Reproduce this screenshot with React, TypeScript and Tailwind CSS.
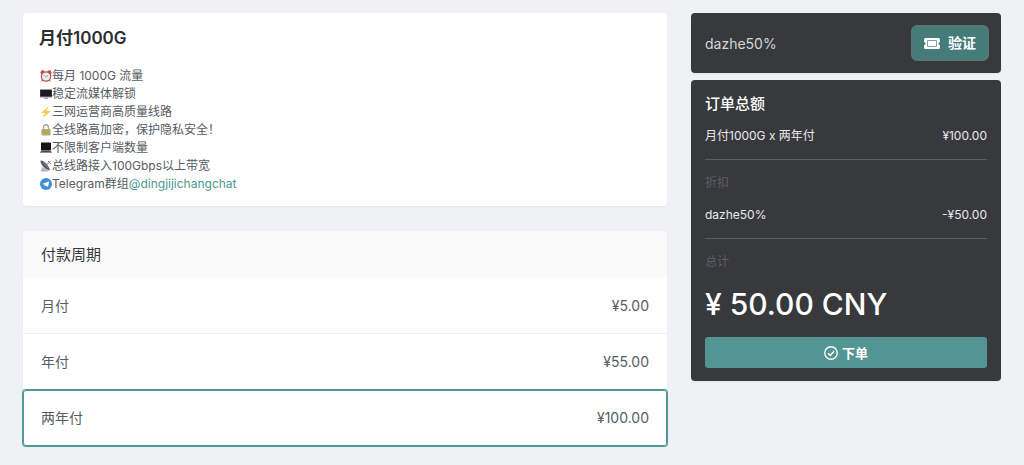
import React, { useState } from 'react';

interface Period {
  id: string;
  label: string;
  price: number;
}

const PERIODS: Period[] = [
  { id: 'month', label: '月付', price: 5 },
  { id: 'year', label: '年付', price: 55 },
  { id: 'two_year', label: '两年付', price: 100 },
];

const ClockIcon = () => (
  <svg viewBox="0 0 24 24" className="size-3 shrink-0" aria-hidden="true">
    <path d="M6 19l-3 4M18 19l3 4" stroke="#8d4a4c" strokeWidth="2" />
    <circle cx="5.5" cy="5" r="4.5" fill="#c5484b" />
    <circle cx="18.5" cy="5" r="4.5" fill="#c5484b" />
    <circle cx="12" cy="13" r="10.5" fill="#b9474b" />
    <circle cx="12" cy="13" r="8.2" fill="#f1ecec" />
    <path d="M7.5 10l4.5 4 4-3" fill="none" stroke="#8b8b90" strokeWidth="1.5" />
  </svg>
);

const MonitorIcon = () => (
  <svg viewBox="0 0 24 24" className="size-3 shrink-0" aria-hidden="true">
    <rect x="0" y="3" width="24" height="16" rx="1" fill="#8b8f95" />
    <rect x="0.5" y="3.5" width="23" height="13.5" fill="#1a1b1e" />
    <path d="M9 19h6l1 3H8z" fill="#a3a6aa" />
  </svg>
);

const BoltIcon = () => (
  <svg viewBox="0 0 24 24" className="size-3 shrink-0" aria-hidden="true">
    <path d="M18 0L2 14h8L5 24l17-14h-9z" fill="#fbc94b" />
  </svg>
);

const LockIcon = () => (
  <svg viewBox="0 0 24 24" className="size-3 shrink-0" aria-hidden="true">
    <path d="M7 12V6.5a5 5 0 0 1 10 0V12" fill="none" stroke="#a3a6a6" strokeWidth="2.6" />
    <rect x="3" y="10" width="18" height="13" rx="1.5" fill="#b9ae6c" />
    <path d="M3 14h18M3 18h18" stroke="#9f9555" strokeWidth="1.2" />
  </svg>
);

const LaptopIcon = () => (
  <svg viewBox="0 0 24 24" className="size-3 shrink-0" aria-hidden="true">
    <rect x="2" y="1" width="20" height="15" rx="1" fill="#141518" />
    <path d="M2 16h20l2 6H0z" fill="#8a8c91" />
    <path d="M4 17.5h16l1 2.5H3z" fill="#46484d" />
  </svg>
);

const SatelliteIcon = () => (
  <svg viewBox="0 0 24 24" className="size-3 shrink-0" aria-hidden="true">
    <path d="M1 23l5-10 9 8 2 2z" fill="#aeb2b8" />
    <path d="M1 1c-1 9 4 19 19 20z" fill="#d3d6da" />
    <path d="M1 1c8 1 17 10 19 20C11 19 2 11 1 1z" fill="#54585f" />
    <path d="M6 6c4 2 8 6 10 10" fill="none" stroke="#8e9298" strokeWidth="1.5" />
    <path d="M11 12l10-10M16 2l6 6" stroke="#7c8086" strokeWidth="2" />
  </svg>
);

const TelegramIcon = () => (
  <svg viewBox="0 0 24 24" className="size-3 shrink-0" aria-hidden="true">
    <circle cx="12" cy="12" r="12" fill="#3d8fd6" />
    <path d="M4.5 12L18.5 6.3 16 18.2l-4.2-3-2.1 2-.4-3.8z" fill="#fff" />
    <path d="M9.3 13.4l6.4-4.6-4.6 5.4z" fill="#b9d8f0" />
  </svg>
);

const TicketIcon = () => (
  <svg viewBox="0 0 32 22" className="h-[11px] w-4" aria-hidden="true">
    <path
      d="M3 0h26a3 3 0 0 1 3 3v5a3 3 0 0 0 0 6v5a3 3 0 0 1-3 3H3a3 3 0 0 1-3-3v-5a3 3 0 0 0 0-6V3a3 3 0 0 1 3-3z"
      fill="#fff"
    />
    <rect x="7" y="5" width="18" height="12" rx="1" fill="none" stroke="#457b78" strokeWidth="1.4" />
  </svg>
);

const CheckCircleIcon = () => (
  <svg viewBox="0 0 28 28" className="size-[14px]" fill="none" stroke="#fff" aria-hidden="true">
    <circle cx="14" cy="14" r="12.5" strokeWidth="2.6" />
    <path d="M8 14.5l4.5 4.3 7.8-9" strokeWidth="3.2" />
  </svg>
);

const FEATURES = [
  { icon: <ClockIcon />, text: '每月 1000G 流量' },
  { icon: <MonitorIcon />, text: '稳定流媒体解锁' },
  { icon: <BoltIcon />, text: '三网运营商高质量线路' },
  { icon: <LockIcon />, text: '全线路高加密，保护隐私安全！' },
  { icon: <LaptopIcon />, text: '不限制客户端数量' },
  { icon: <SatelliteIcon />, text: '总线路接入100Gbps以上带宽' },
];

const formatPrice = (value: number) => `¥${value.toFixed(2)}`;

const App: React.FC = () => {
  const [selectedId, setSelectedId] = useState('two_year');
  const [coupon, setCoupon] = useState('dazhe50%');

  const selected = PERIODS.find((p) => p.id === selectedId) ?? PERIODS[0];
  const discount = selected.price / 2;

  return (
    <div
      lang="zh-CN"
      className="min-h-screen bg-[#f0f1f5] px-[23px] py-[13px] font-['Inter','Noto_Sans_CJK_SC',sans-serif] text-[#575c62]"
    >
      <div className="grid grid-cols-3 items-start gap-6">
        <main className="col-span-2 flex flex-col gap-[25px]">
          {/* Plan */}
          <section className="rounded bg-white px-4 pt-[13px] pb-[13px] shadow-xs">
            <h1 className="text-[17px] leading-6 font-semibold text-[#2b2e32]">月付1000G</h1>
            <ul className="mt-[17px] pl-px text-xs leading-[18px]">
              {FEATURES.map((item) => (
                <li key={item.text} className="flex items-center">
                  {item.icon}
                  <span>{item.text}</span>
                </li>
              ))}
              <li className="flex items-center">
                <TelegramIcon />
                <span>
                  Telegram群组
                  <a href="#dingjijichangchat" className="text-[#4b9793]">@dingjijichangchat</a>
                </span>
              </li>
            </ul>
          </section>

          {/* Billing period */}
          <section className="rounded bg-white shadow-xs">
            <h2 className="rounded-t bg-[#fafafa] px-[18px] py-3 text-[15px] leading-[23px] text-[#36393d]">付款周期</h2>
            {PERIODS.map((period) => (
              <button
                key={period.id}
                type="button"
                aria-pressed={period.id === selectedId}
                onClick={() => setSelectedId(period.id)}
                className={`flex h-14 w-full cursor-pointer items-center justify-between text-sm ${
                  period.id === selectedId
                    ? 'rounded-[3px] border border-[#4f9a96] px-[17px] ring-1 ring-[#4f9a96]'
                    : 'border-b border-[#f0f1f3] px-[18px]'
                }`}
              >
                <span>{period.label}</span>
                <span>{formatPrice(period.price)}</span>
              </button>
            ))}
          </section>
        </main>

        <aside className="flex flex-col gap-[7px] text-[#e9eaec]">
          {/* Coupon */}
          <form
            onSubmit={(e) => e.preventDefault()}
            className="flex items-center gap-2 rounded bg-[#38393d] py-3 pr-3 pl-[14px] shadow-xs"
          >
            <input
              type="text"
              aria-label="优惠券"
              value={coupon}
              onChange={(e) => setCoupon(e.target.value)}
              className="h-9 min-w-0 flex-1 bg-transparent text-sm text-[#d5d6d9] outline-none"
            />
            <button
              type="submit"
              className="flex h-9 items-center gap-2 rounded-md border-2 border-[#557775] bg-[#457b78] px-[11px] text-sm font-semibold text-white"
            >
              <TicketIcon />
              验证
            </button>
          </form>

          {/* Order total */}
          <section className="flex flex-col gap-[14px] rounded bg-[#38393d] px-[14px] pt-[15px] pb-[13px] text-xs leading-[18px] shadow-xs">
            <h2 className="text-[15px] leading-[18px] font-medium text-white">订单总额</h2>
            <div className="flex justify-between">
              <span>月付1000G x {selected.label}</span>
              <span>{formatPrice(selected.price)}</span>
            </div>
            <hr className="border-[#5c5d61]" />
            <div className="text-[#5f6065]">折扣</div>
            <div className="flex justify-between">
              <span>{coupon}</span>
              <span>-{formatPrice(discount)}</span>
            </div>
            <hr className="border-[#5c5d61]" />
            <div className="text-[#5f6065]">总计</div>
            <div className="text-3xl leading-[38px] font-medium text-white">
              ¥ {(selected.price - discount).toFixed(2)} CNY
            </div>
            <button
              type="button"
              className="flex h-[31px] items-center justify-center gap-1 rounded-[3px] bg-[#529592] text-[13px] font-semibold text-white"
            >
              <CheckCircleIcon />
              下单
            </button>
          </section>
        </aside>
      </div>
    </div>
  );
};

export default App;
